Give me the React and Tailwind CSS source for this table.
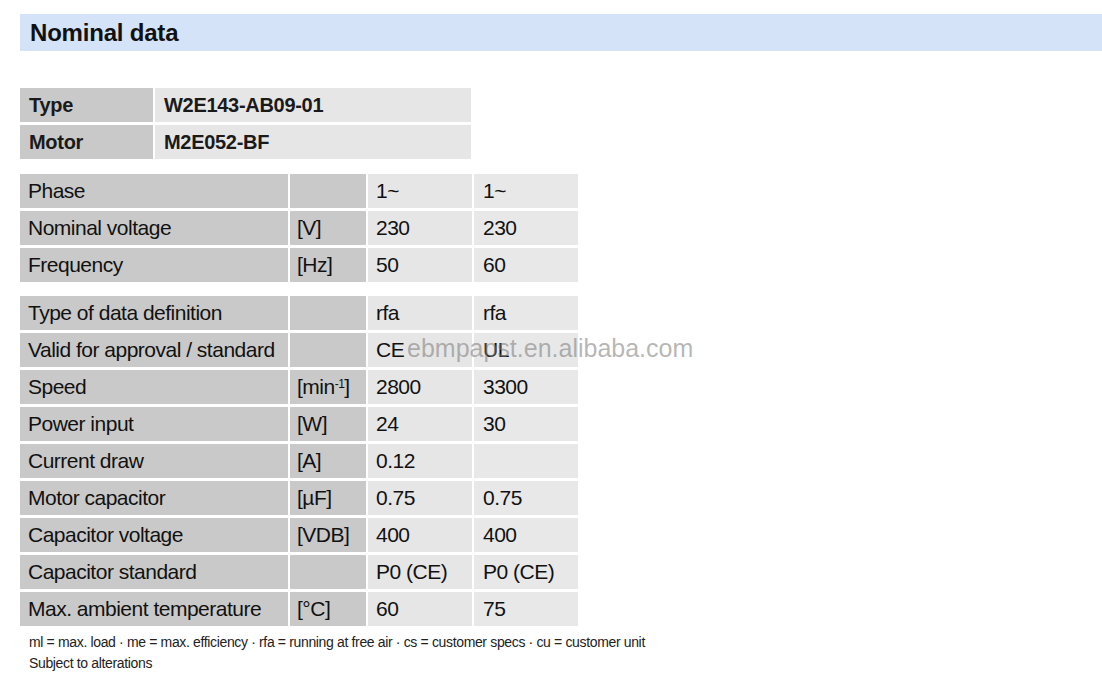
import React from "react";

const topRows = [
  ["Type", "W2E143-AB09-01"],
  ["Motor", "M2E052-BF"],
];

const group1 = [
  ["Phase", "", "1~", "1~"],
  ["Nominal voltage", "[V]", "230", "230"],
  ["Frequency", "[Hz]", "50", "60"],
];

const group2 = [
  ["Type of data definition", "", "rfa", "rfa"],
  ["Valid for approval / standard", "", "CE", "UL"],
  ["Speed", "min", "2800", "3300"],
  ["Power input", "[W]", "24", "30"],
  ["Current draw", "[A]", "0.12", ""],
  ["Motor capacitor", "[µF]", "0.75", "0.75"],
  ["Capacitor voltage", "[VDB]", "400", "400"],
  ["Capacitor standard", "", "P0 (CE)", "P0 (CE)"],
  ["Max. ambient temperature", "[°C]", "60", "75"],
];

const Unit = ({ unit }) => {
  if (unit === "min") {
    return (
      <>
        [min<sup className="text-[12px]">-1</sup>]
      </>
    );
  }
  return unit;
};

const DataTable = ({ rows }) => (
  <div className="grid grid-cols-[268px_76px_104px_104px] gap-x-[2px] gap-y-[3px] text-[21px] tracking-[-0.5px] text-[#111]">
    {rows.map(([label, unit, v1, v2]) => (
      <React.Fragment key={label}>
        <div className="h-[34px] leading-[34px] pl-2 bg-[#c9c9c9] whitespace-nowrap">
          {label}
        </div>
        <div className="h-[34px] leading-[34px] pl-[7px] bg-[#c9c9c9] whitespace-nowrap">
          <Unit unit={unit} />
        </div>
        <div className="h-[34px] leading-[34px] pl-2 bg-[#e6e6e6] whitespace-nowrap">
          {v1}
        </div>
        <div className="h-[34px] leading-[34px] pl-[9px] bg-[#e8e8e8] whitespace-nowrap">
          {v2}
        </div>
      </React.Fragment>
    ))}
  </div>
);

export default function App() {
  return (
    <div className="relative w-[1102px] h-[697px] bg-white font-['Liberation_Sans',Arial,sans-serif] overflow-hidden">
      <div className="pt-[14px] pl-5">
        <div className="h-[37px] bg-[#d4e3f8] pl-[10px] flex items-center text-[24px] font-bold text-[#111] tracking-[-0.2px]">
          Nominal data
        </div>

        <div className="mt-[37px] grid grid-cols-[133px_316px] gap-x-[2px] gap-y-[3px] text-[20px] font-bold tracking-[-0.3px] text-[#1a1a1a]">
          {topRows.map(([k, v]) => (
            <React.Fragment key={k}>
              <div className="h-[34px] leading-[34px] pl-[9px] bg-[#c9c9c9]">{k}</div>
              <div className="h-[34px] leading-[34px] pl-[9px] bg-[#e6e6e6]">{v}</div>
            </React.Fragment>
          ))}
        </div>

        <div className="mt-[15px]">
          <DataTable rows={group1} />
        </div>
        <div className="mt-[14px]">
          <DataTable rows={group2} />
        </div>

        <div className="mt-[6px] pl-[9px] text-[14px] leading-[21px] tracking-[-0.35px] text-[#222]">
          <p>
            ml = max. load · me = max. efficiency · rfa = running at free air · cs = customer specs · cu = customer unit
          </p>
          <p>Subject to alterations</p>
        </div>
      </div>

      {/* watermark */}
      <div className="absolute left-[407px] top-[334px] text-[25px] leading-[28px] text-[rgba(120,120,120,0.55)] whitespace-nowrap pointer-events-none">
        ebmpapst.en.alibaba.com
      </div>
    </div>
  );
}
